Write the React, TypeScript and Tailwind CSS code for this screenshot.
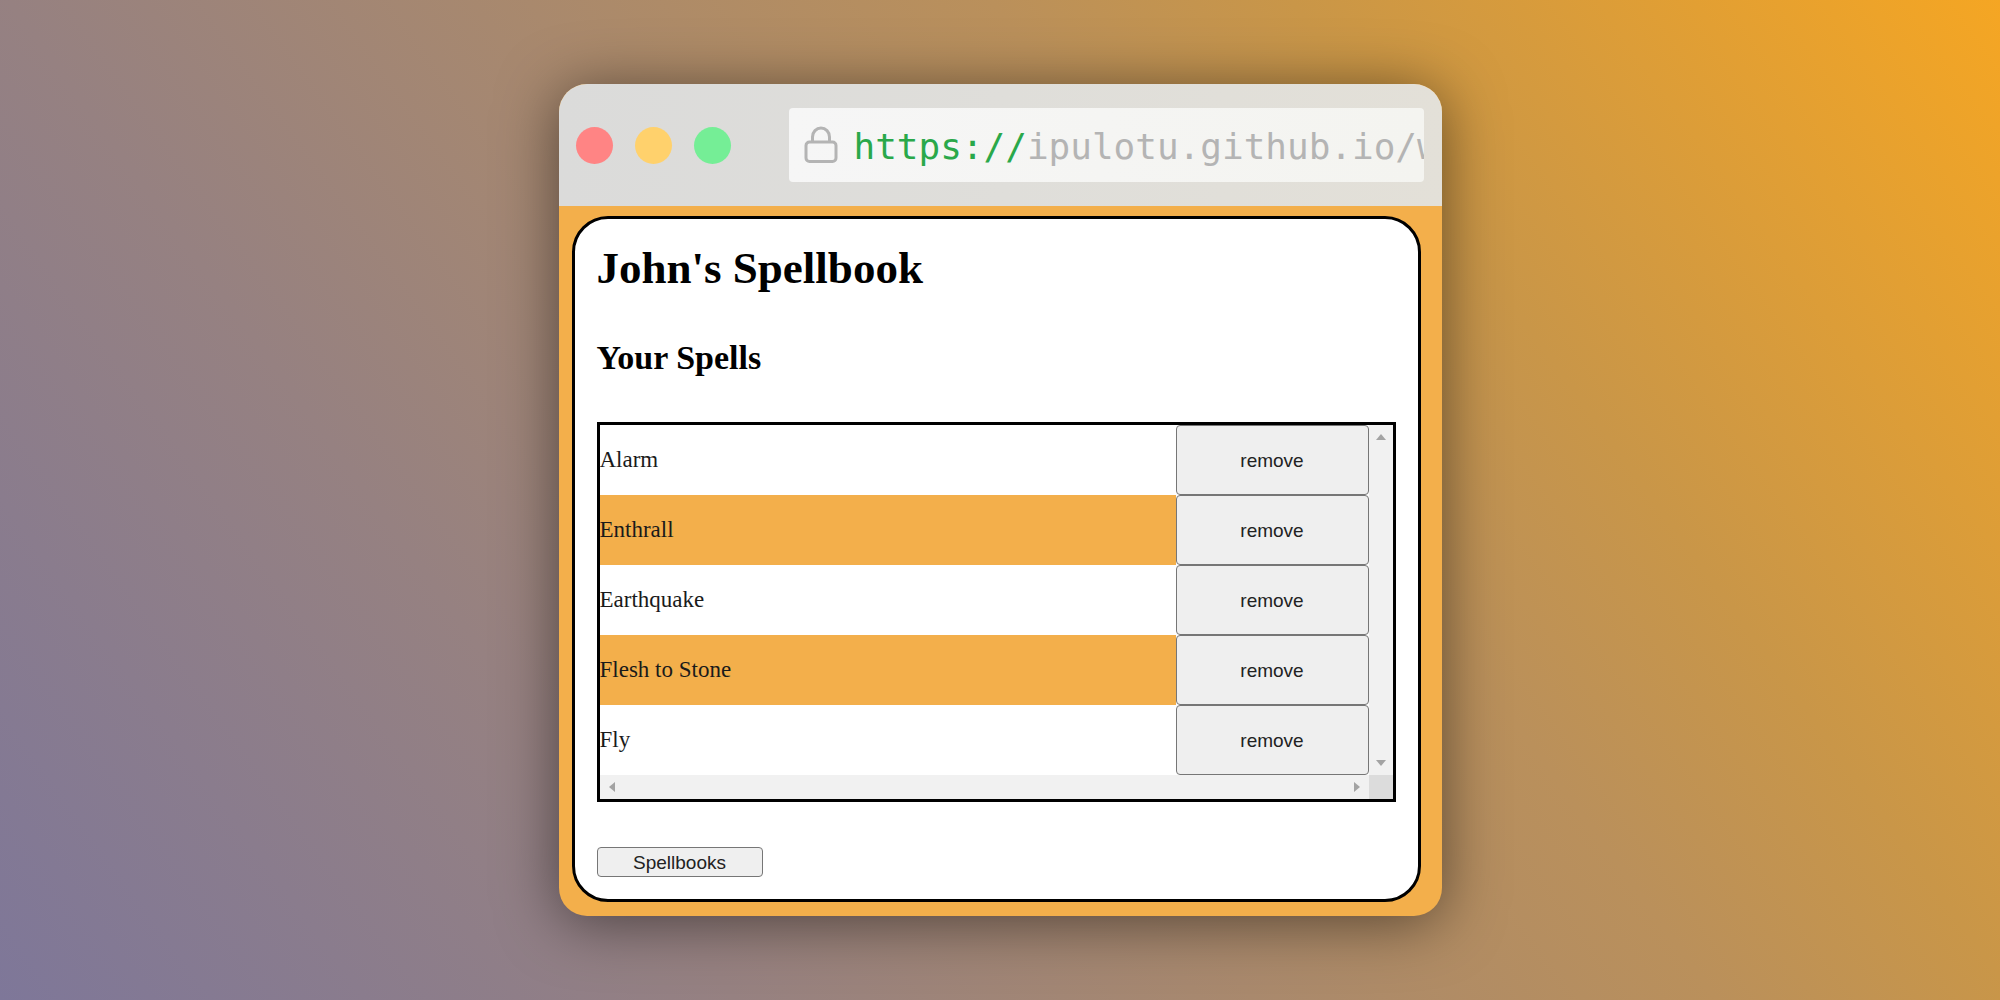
const spells = ['Alarm', 'Enthrall', 'Earthquake', 'Flesh to Stone', 'Fly'];

const dots = ['bg-[#ff8484]', 'bg-[#ffd16c]', 'bg-[#75ee96]'];

function LockIcon() {
  return (
    <svg viewBox="0 0 34 38" className="h-[38px] w-[34px] shrink-0" fill="none" stroke="#b4b4b4" strokeWidth="3" aria-hidden="true">
      <rect x="2" y="16" width="30" height="19.500" rx="3.500" />
      <path d="M8.500 16v-5a8.500 9 0 0 1 17 0v5" />
    </svg>
  );
}

function Arrow({ points, label }: { points: string; label: string }) {
  return (
    <button type="button" aria-label={label} className="flex size-6 items-center justify-center">
      <svg viewBox="0 0 12 12" className="size-3" fill="#a3a3a3" aria-hidden="true">
        <polygon points={points} />
      </svg>
    </button>
  );
}

function TitleBar() {
  return (
    <header className="flex h-[122px] items-center bg-linear-to-r from-[#dbdbda] via-[#dfdeda] to-[#e3e0d8] pr-[18px] pl-[17px]">
      <div className="flex gap-[22px]">
        {dots.map((dot) => (
          <span key={dot} className={`size-[37px] rounded-full ${dot}`} />
        ))}
      </div>
      <div className="ml-[58px] flex h-[74px] min-w-0 flex-1 items-center gap-4 overflow-hidden rounded-[4px] bg-linear-to-r from-[#f6f6f6] to-[#f4f4f0] pl-[15px]">
        <LockIcon />
        <a href="#spells" className="pt-1 font-['DejaVu_Sans_Mono',monospace] text-[36px] leading-none whitespace-nowrap text-[#b4b4b4]">
          <span className="text-[#2aa84a]">https://</span>ipulotu.github.io/w
        </a>
      </div>
    </header>
  );
}

function SpellList() {
  return (
    <div id="spells" className="mt-[46px] grid grid-cols-[1fr_24px] border-[3px] border-black">
      <table className="w-full border-collapse">
        <tbody>
          {spells.map((spell) => (
            <tr key={spell} className="group h-[70px]">
              <td className="p-0 text-[23px] text-[#1a1a1a] group-even:bg-[#f3af4b]">{spell}</td>
              <td className="w-[193px] p-0">
                <button type="button" className="block h-[70px] w-full rounded-[4px] border border-[#767676] bg-[#efefef] pt-0.5 font-['Liberation_Sans',sans-serif] text-[19px] text-[#222]">
                  remove
                </button>
              </td>
            </tr>
          ))}
        </tbody>
      </table>
      <div className="flex flex-col justify-between bg-[#f1f1f1]">
        <Arrow label="Scroll up" points="1,9 6,3 11,9" />
        <Arrow label="Scroll down" points="1,3 6,9 11,3" />
      </div>
      <div className="flex justify-between bg-[#f1f1f1]">
        <Arrow label="Scroll left" points="9,1 3,6 9,11" />
        <Arrow label="Scroll right" points="3,1 9,6 3,11" />
      </div>
      <div className="bg-[#dcdcdc]" />
    </div>
  );
}

export default function App() {
  return (
    <div className="flex min-h-screen items-center justify-center bg-[linear-gradient(54deg,#7e7799_0%,#968181_27%,#ba905b_63%,#c99648_74%,#f5a623_100%)] font-['Liberation_Serif',serif]">
      <div className="w-full max-w-[883px] overflow-hidden rounded-[28px] bg-[#f3af4b] shadow-[0_6px_60px_rgba(0,0,0,0.5)]">
        <TitleBar />
        <main className="mt-[10px] mr-[21px] mb-[14px] ml-[13px] rounded-[36px] border-[3px] border-black bg-white px-[22px] pt-[23px] pb-[22px] text-black">
          <h1 className="text-[45px] leading-[52px] font-bold">John's Spellbook</h1>
          <h2 className="mt-[46px] text-[34px] leading-9 font-bold">Your Spells</h2>
          <SpellList />
          <button type="button" className="mt-[45px] block h-[30px] w-[166px] rounded-[4px] border border-[#767676] bg-[#efefef] font-['Liberation_Sans',sans-serif] text-[19px] leading-none text-[#222]">
            Spellbooks
          </button>
        </main>
      </div>
    </div>
  );
}
